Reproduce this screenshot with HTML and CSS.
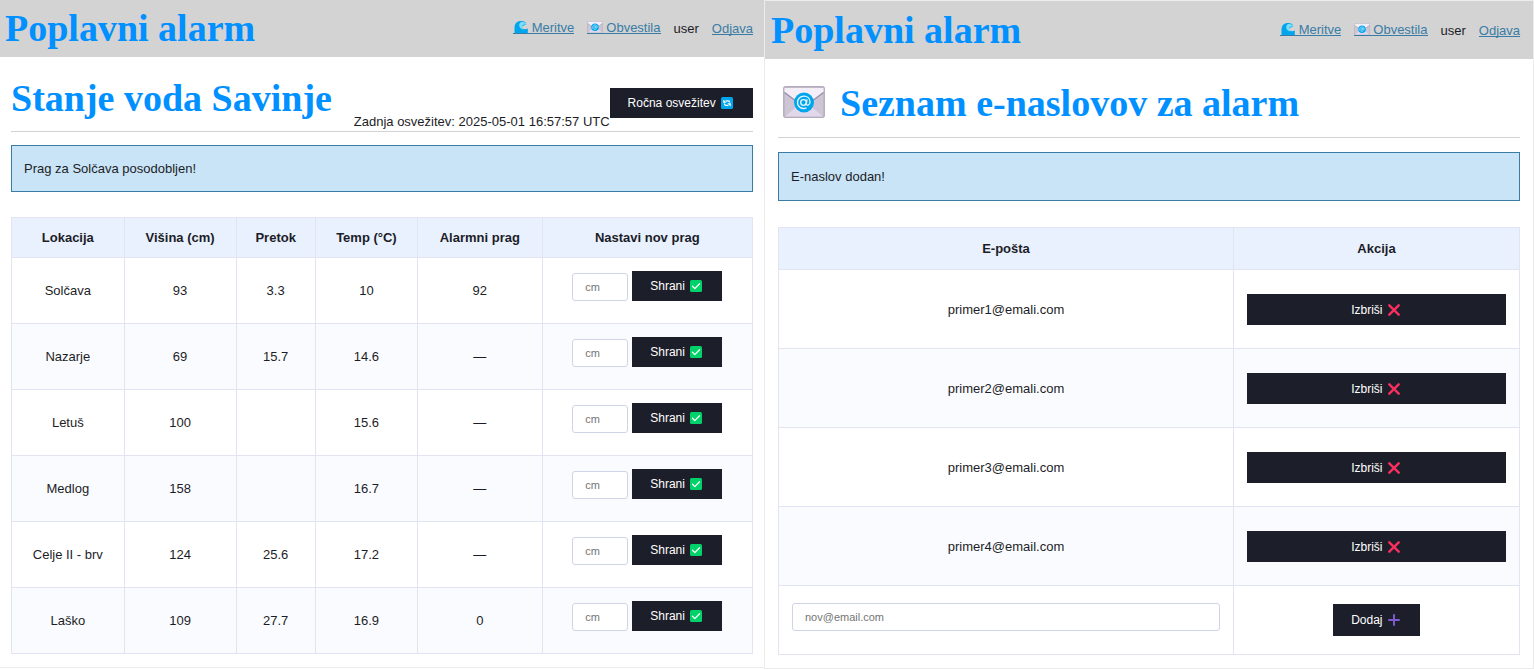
FILE: index.html
```html
<!DOCTYPE html>
<html lang="sl">
<head>
<meta charset="utf-8">
<title>Poplavni alarm</title>
<link rel="stylesheet" href="styles.css">
</head>
<body>
<svg class="sprite" aria-hidden="true">
  <symbol id="wave" viewBox="0 0 16 12">
    <path fill="#00a6ed" d="M1.500 12V7C1.500 2.500 4 0 8 0c3 0 4.800 1.200 5.300 3.200L9 5.500c0 1.800 1.200 2.800 2.800 2.800 1.200 0 2.200-.3 3-.8V12z"/>
    <path fill="#7ddcf7" d="M7.500 1.200c3-.8 5.300.2 6 2.300-1.800-.3-3.300 0-3.900 1C9 5.700 9.400 7.500 10.500 8.500 8 8.300 6 6.300 6.200 3.800c.1-1 .6-2 1.300-2.600z"/>
  </symbol>
  <symbol id="mail" viewBox="0 0 42 32">
    <rect x=".8" y=".8" width="40.400" height="30.400" rx="2" fill="#cdc4d6" stroke="#b4acbc" stroke-width="1.500"/>
    <path fill="#e1d8ec" d="M2 30.500 18 17h6l16 13.500z"/>
    <path fill="#f3eef8" d="M1.500 2h39v4L24 18h-6L1.500 6z"/>
    <path fill="none" stroke="#998ea4" stroke-width="1.200" d="m1.500 6.500 14 10.500M40.500 6.500 26.500 17"/>
    <circle cx="21" cy="16.500" r="10" fill="#00a6ed"/>
    <circle cx="20.500" cy="16.500" r="2.800" fill="none" stroke="#e8f7ff" stroke-width="1.300"/>
    <path fill="none" stroke="#e8f7ff" stroke-width="1.300" d="M24 13.300l-.7 4.500c-.2 2.200 3.700 1.800 3.700-1.800 0-3.500-2.700-5.800-6.200-5.800-3.600 0-6.300 2.800-6.300 6.300 0 4.500 4.500 7.300 9 5.300"/>
  </symbol>
  <symbol id="refresh" viewBox="0 0 12 12">
    <rect width="12" height="12" rx="1.500" fill="#00a6ed"/>
    <path fill="none" stroke="#fff" stroke-width="1.200" d="M4.500 3.800h2.700q1.500 0 1.500 1.700M7.500 8.300H4.800q-1.500 0-1.500-1.700"/>
    <path fill="#fff" d="M2.300 2.500v3.300h3.300zM9.700 9.500V6.200H6.400z"/>
  </symbol>
  <symbol id="check" viewBox="0 0 12 12">
    <rect width="12" height="12" rx="1.500" fill="#00d26a"/>
    <path fill="none" stroke="#fff" stroke-width="1.300" stroke-linecap="round" stroke-linejoin="round" d="m2.500 6.300 2.300 2.300 4.700-4.900"/>
  </symbol>
  <symbol id="cross" viewBox="0 0 12 12">
    <path stroke="#f92f60" stroke-width="2.400" stroke-linecap="round" d="m1.300 1.300 9.400 9.400M10.700 1.300l-9.400 9.400"/>
  </symbol>
  <symbol id="plus" viewBox="0 0 12 12">
    <path stroke="#7d5bcf" stroke-width="2" stroke-linecap="round" d="M6 1v10M1 6h10"/>
  </symbol>
</svg>
<div class="screens">
  <section class="panel">
    <header class="topbar">
      <div class="title">Poplavni alarm</div>
      <nav class="nav">
        <a href="#meritve"><svg class="nav-icon"><use href="#wave"/></svg>Meritve</a>
        <a href="#obvestila"><svg class="nav-icon"><use href="#mail"/></svg>Obvestila</a>
        <span>user</span>
        <a href="#odjava">Odjava</a>
      </nav>
    </header>
    <main class="content">
      <div class="heading">
        <h1 class="title">Stanje voda Savinje</h1>
        <div class="status">
          <span>Zadnja osvežitev: 2025-05-01 16:57:57 UTC</span>
          <button class="button" type="button">Ročna osvežitev <svg class="icon"><use href="#refresh"/></svg></button>
        </div>
      </div>
      <p class="message">Prag za Solčava posodobljen!</p>
      <table class="table levels">
        <colgroup><col class="c-place"><col class="c-height"><col class="c-flow"><col class="c-temp"><col class="c-limit"><col></colgroup>
        <thead><tr><th>Lokacija</th><th>Višina (cm)</th><th>Pretok</th><th>Temp (°C)</th><th>Alarmni prag</th><th>Nastavi nov prag</th></tr></thead>
        <tbody>
          <tr><td>Solčava</td><td>93</td><td>3.3</td><td>10</td><td>92</td><td><form class="limit"><input class="field" type="text" placeholder="cm" aria-label="Nov prag za Solčava"><button class="button" type="button">Shrani <svg class="icon"><use href="#check"/></svg></button></form></td></tr>
          <tr><td>Nazarje</td><td>69</td><td>15.7</td><td>14.6</td><td>—</td><td><form class="limit"><input class="field" type="text" placeholder="cm" aria-label="Nov prag za Nazarje"><button class="button" type="button">Shrani <svg class="icon"><use href="#check"/></svg></button></form></td></tr>
          <tr><td>Letuš</td><td>100</td><td></td><td>15.6</td><td>—</td><td><form class="limit"><input class="field" type="text" placeholder="cm" aria-label="Nov prag za Letuš"><button class="button" type="button">Shrani <svg class="icon"><use href="#check"/></svg></button></form></td></tr>
          <tr><td>Medlog</td><td>158</td><td></td><td>16.7</td><td>—</td><td><form class="limit"><input class="field" type="text" placeholder="cm" aria-label="Nov prag za Medlog"><button class="button" type="button">Shrani <svg class="icon"><use href="#check"/></svg></button></form></td></tr>
          <tr><td>Celje II - brv</td><td>124</td><td>25.6</td><td>17.2</td><td>—</td><td><form class="limit"><input class="field" type="text" placeholder="cm" aria-label="Nov prag za Celje II - brv"><button class="button" type="button">Shrani <svg class="icon"><use href="#check"/></svg></button></form></td></tr>
          <tr><td>Laško</td><td>109</td><td>27.7</td><td>16.9</td><td>0</td><td><form class="limit"><input class="field" type="text" placeholder="cm" aria-label="Nov prag za Laško"><button class="button" type="button">Shrani <svg class="icon"><use href="#check"/></svg></button></form></td></tr>
        </tbody>
      </table>
    </main>
  </section>
  <section class="panel framed">
    <header class="topbar">
      <div class="title">Poplavni alarm</div>
      <nav class="nav">
        <a href="#meritve"><svg class="nav-icon"><use href="#wave"/></svg>Meritve</a>
        <a href="#obvestila"><svg class="nav-icon"><use href="#mail"/></svg>Obvestila</a>
        <span>user</span>
        <a href="#odjava">Odjava</a>
      </nav>
    </header>
    <main class="content">
      <div class="heading">
        <h1 class="title with-icon"><svg class="title-icon"><use href="#mail"/></svg>Seznam e-naslovov za alarm</h1>
      </div>
      <p class="message">E-naslov dodan!</p>
      <form id="add"></form>
      <table class="table mails">
        <colgroup><col class="c-mail"><col></colgroup>
        <thead><tr><th>E-pošta</th><th>Akcija</th></tr></thead>
        <tbody>
          <tr><td>primer1@emali.com</td><td><button class="button wide" type="button">Izbriši <svg class="icon"><use href="#cross"/></svg></button></td></tr>
          <tr><td>primer2@emali.com</td><td><button class="button wide" type="button">Izbriši <svg class="icon"><use href="#cross"/></svg></button></td></tr>
          <tr><td>primer3@emali.com</td><td><button class="button wide" type="button">Izbriši <svg class="icon"><use href="#cross"/></svg></button></td></tr>
          <tr><td>primer4@email.com</td><td><button class="button wide" type="button">Izbriši <svg class="icon"><use href="#cross"/></svg></button></td></tr>
          <tr class="add-row"><td><input class="field wide" form="add" type="email" placeholder="nov@email.com" aria-label="Nov e-naslov"></td><td><button class="button" form="add" type="button">Dodaj <svg class="icon"><use href="#plus"/></svg></button></td></tr>
        </tbody>
      </table>
    </main>
  </section>
</div>
</body>
</html>
```
FILE: styles.css
```css
* { box-sizing: border-box; }
body {
  margin: 0;
  background: #fff;
  color: #1c1d26;
  font: 13px/15px "Liberation Sans", Arial, sans-serif;
}
.sprite { display: none; }
.screens {
  display: grid;
  grid-template-columns: 764fr 770fr;
  align-items: start;
}
.panel { border-bottom: 1px solid #ececec; }
.framed {
  border: 1px solid #ececec;
}
.topbar {
  display: flex;
  align-items: center;
  justify-content: space-between;
  padding: 6px 11px 7px 5px;
  background: #d3d3d3;
}
.framed .topbar { padding: 7px 13px 7px 6px; }
.title {
  margin: 0;
  color: #0090ff;
  font: bold 38px/44px "Liberation Serif", "Times New Roman", serif;
  white-space: nowrap;
}
.nav {
  display: flex;
  align-items: baseline;
  gap: 13px;
  line-height: 11px;
}
.nav a {
  display: inline-flex;
  align-items: center;
  gap: 3px;
  color: #3a7ca5;
  text-decoration: none;
  border-bottom: 1px solid #3a7ca5;
}
.nav-icon {
  width: 16px;
  height: 12px;
  margin: -1px 0 0;
}
.content { padding: 0 11px 13px; }
.framed .content { padding: 0 13px 13px; }
.heading {
  display: flex;
  align-items: flex-end;
  justify-content: space-between;
  padding-top: 19px;
  border-bottom: 1px solid #d3d3d3;
}
.heading .title { margin-bottom: 11px; }
.framed .heading { padding-top: 22px; }
.framed .heading .title { margin-bottom: 12px; }
.with-icon {
  display: flex;
  align-items: center;
  gap: 15px;
  padding-left: 5px;
}
.title-icon {
  width: 42px;
  height: 32px;
  margin-bottom: 2px;
}
.status {
  display: flex;
  align-items: flex-end;
  padding-bottom: 2px;
  white-space: nowrap;
}
.status .button { margin-bottom: 11px; }
.message {
  margin: 13px 0 25px;
  padding: 15px 12px;
  border: 1px solid #3a7ca5;
  background: #c9e4f6;
}
.framed .message {
  margin: 14px 0 26px;
  padding: 16px 12px;
}
.button {
  height: 30px;
  padding: 0 18px;
  border: 0;
  background: #1c1e29;
  color: #fff;
  font: 12px/14px "Liberation Sans", Arial, sans-serif;
  white-space: nowrap;
}
.icon {
  width: 12px;
  height: 12px;
  margin: 0 2px;
  vertical-align: -2px;
}
.table {
  width: 100%;
  table-layout: fixed;
  border-collapse: collapse;
  text-align: center;
}
.table th,
.table td { border: 1px solid #e2e5f1; }
.table th {
  padding: 12px 0;
  background: #e9f1ff;
}
.table td { padding: 13px; }
.table td:first-child { padding: 0 13px; }
.table tbody tr:nth-child(even) { background: #fafbff; }
.c-place { width: 15.2%; }
.c-height { width: 15.1%; }
.c-flow { width: 10.7%; }
.c-temp { width: 13.8%; }
.c-limit { width: 16.8%; }
.c-mail { width: 61.4%; }
.limit {
  display: flex;
  align-items: flex-end;
  justify-content: center;
  gap: 4px;
  margin-bottom: 9px;
}
.field {
  width: 56px;
  height: 28px;
  padding: 0 12px;
  border: 1px solid #cfd5e6;
  border-radius: 3px;
  background: #fff;
  color: #1c1d26;
  font: 11px/13px "Liberation Sans", Arial, sans-serif;
}
.field::placeholder { color: #757575; }
.mails th { padding: 13px 0; }
.mails td { padding: 24px 13px 23px; }
.mails .button {
  display: block;
  height: 31px;
  margin: 0 auto;
}
.mails .wide { width: 100%; }
.mails .add-row td { padding: 18px 13px; }
.mails .add-row td:first-child { padding: 0 13px 7px; }
.mails .add-row .button { height: 32px; }
```
